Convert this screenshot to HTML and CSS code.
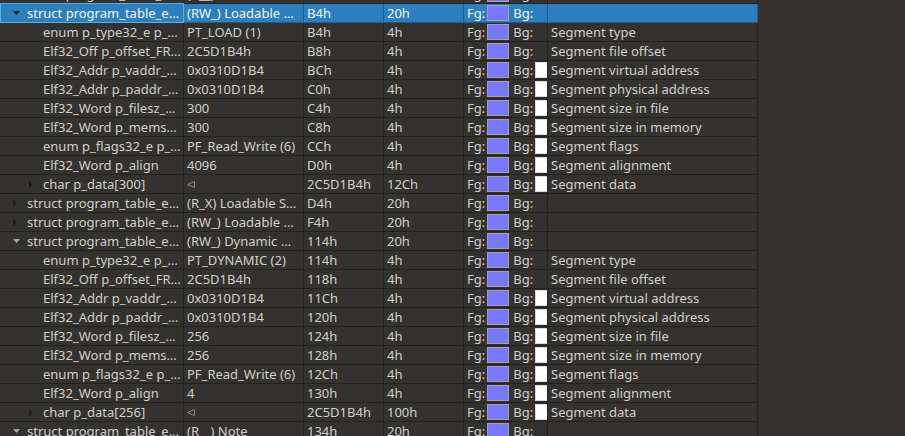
FILE: index.html
```html
<!DOCTYPE html>
<html>
<head>
<meta charset="utf-8">
<link rel="stylesheet" href="styles.css">
</head>
<body>
<div class="tree">
  <div class="row">
    <div class="cell c1 l0"><span class="tw"><svg class="arr dn" width="7" height="4"><polygon points="0,0 7,0 3.5,4"/></svg></span>struct program_table_e…</div>
    <div class="cell c2">(R__) PHDR</div>
    <div class="cell c3">34h</div>
    <div class="cell c4">20h</div>
    <div class="cell c5">Fg:<span class="sw fg"></span><span class="bg-l">Bg:</span></div>
    <div class="cell c6"></div>
  </div>

  <div class="row sel">
    <div class="cell c1 l0"><span class="tw"><svg class="arr dn" width="7" height="4"><polygon points="0,0 7,0 3.5,4"/></svg></span>struct program_table_e…</div>
    <div class="cell c2">(RW_) Loadable …</div>
    <div class="cell c3">B4h</div>
    <div class="cell c4">20h</div>
    <div class="cell c5">Fg:<span class="sw fg"></span><span class="bg-l">Bg:</span></div>
    <div class="cell c6"></div>
  </div>
  <div class="row">
    <div class="cell c1 l1"><span class="tw"></span>enum p_type32_e p_…</div>
    <div class="cell c2">PT_LOAD (1)</div>
    <div class="cell c3">B4h</div>
    <div class="cell c4">4h</div>
    <div class="cell c5">Fg:<span class="sw fg"></span><span class="bg-l">Bg:</span></div>
    <div class="cell c6">Segment type</div>
  </div>
  <div class="row">
    <div class="cell c1 l1"><span class="tw"></span>Elf32_Off p_offset_FR…</div>
    <div class="cell c2">2C5D1B4h</div>
    <div class="cell c3">B8h</div>
    <div class="cell c4">4h</div>
    <div class="cell c5">Fg:<span class="sw fg"></span><span class="bg-l">Bg:</span></div>
    <div class="cell c6">Segment file offset</div>
  </div>
  <div class="row">
    <div class="cell c1 l1"><span class="tw"></span>Elf32_Addr p_vaddr_…</div>
    <div class="cell c2">0x0310D1B4</div>
    <div class="cell c3">BCh</div>
    <div class="cell c4">4h</div>
    <div class="cell c5">Fg:<span class="sw fg"></span><span class="bg-l">Bg:</span><span class="sw wh"></span></div>
    <div class="cell c6">Segment virtual address</div>
  </div>
  <div class="row">
    <div class="cell c1 l1"><span class="tw"></span>Elf32_Addr p_paddr_…</div>
    <div class="cell c2">0x0310D1B4</div>
    <div class="cell c3">C0h</div>
    <div class="cell c4">4h</div>
    <div class="cell c5">Fg:<span class="sw fg"></span><span class="bg-l">Bg:</span><span class="sw wh"></span></div>
    <div class="cell c6">Segment physical address</div>
  </div>
  <div class="row">
    <div class="cell c1 l1"><span class="tw"></span>Elf32_Word p_filesz_…</div>
    <div class="cell c2">300</div>
    <div class="cell c3">C4h</div>
    <div class="cell c4">4h</div>
    <div class="cell c5">Fg:<span class="sw fg"></span><span class="bg-l">Bg:</span><span class="sw wh"></span></div>
    <div class="cell c6">Segment size in file</div>
  </div>
  <div class="row">
    <div class="cell c1 l1"><span class="tw"></span>Elf32_Word p_mems…</div>
    <div class="cell c2">300</div>
    <div class="cell c3">C8h</div>
    <div class="cell c4">4h</div>
    <div class="cell c5">Fg:<span class="sw fg"></span><span class="bg-l">Bg:</span><span class="sw wh"></span></div>
    <div class="cell c6">Segment size in memory</div>
  </div>
  <div class="row">
    <div class="cell c1 l1"><span class="tw"></span>enum p_flags32_e p_…</div>
    <div class="cell c2">PF_Read_Write (6)</div>
    <div class="cell c3">CCh</div>
    <div class="cell c4">4h</div>
    <div class="cell c5">Fg:<span class="sw fg"></span><span class="bg-l">Bg:</span><span class="sw wh"></span></div>
    <div class="cell c6">Segment flags</div>
  </div>
  <div class="row">
    <div class="cell c1 l1"><span class="tw"></span>Elf32_Word p_align</div>
    <div class="cell c2">4096</div>
    <div class="cell c3">D0h</div>
    <div class="cell c4">4h</div>
    <div class="cell c5">Fg:<span class="sw fg"></span><span class="bg-l">Bg:</span><span class="sw wh"></span></div>
    <div class="cell c6">Segment alignment</div>
  </div>
  <div class="row">
    <div class="cell c1 l1"><span class="tw"><svg class="arr rt" width="4" height="7"><polygon points="0,0 4,3.5 0,7"/></svg></span>char p_data[300]</div>
    <div class="cell c2"><svg class="back" width="8" height="7"><polygon points="7.5,0.5 7.5,6.5 0.5,3.5"/></svg></div>
    <div class="cell c3">2C5D1B4h</div>
    <div class="cell c4">12Ch</div>
    <div class="cell c5">Fg:<span class="sw fg"></span><span class="bg-l">Bg:</span><span class="sw wh"></span></div>
    <div class="cell c6">Segment data</div>
  </div>
  <div class="row">
    <div class="cell c1 l0"><span class="tw"><svg class="arr rt" width="4" height="7"><polygon points="0,0 4,3.5 0,7"/></svg></span>struct program_table_e…</div>
    <div class="cell c2">(R_X) Loadable S…</div>
    <div class="cell c3">D4h</div>
    <div class="cell c4">20h</div>
    <div class="cell c5">Fg:<span class="sw fg"></span><span class="bg-l">Bg:</span></div>
    <div class="cell c6"></div>
  </div>
  <div class="row">
    <div class="cell c1 l0"><span class="tw"><svg class="arr rt" width="4" height="7"><polygon points="0,0 4,3.5 0,7"/></svg></span>struct program_table_e…</div>
    <div class="cell c2">(RW_) Loadable …</div>
    <div class="cell c3">F4h</div>
    <div class="cell c4">20h</div>
    <div class="cell c5">Fg:<span class="sw fg"></span><span class="bg-l">Bg:</span></div>
    <div class="cell c6"></div>
  </div>
  <div class="row">
    <div class="cell c1 l0"><span class="tw"><svg class="arr dn" width="7" height="4"><polygon points="0,0 7,0 3.5,4"/></svg></span>struct program_table_e…</div>
    <div class="cell c2">(RW_) Dynamic …</div>
    <div class="cell c3">114h</div>
    <div class="cell c4">20h</div>
    <div class="cell c5">Fg:<span class="sw fg"></span><span class="bg-l">Bg:</span></div>
    <div class="cell c6"></div>
  </div>
  <div class="row">
    <div class="cell c1 l1"><span class="tw"></span>enum p_type32_e p_…</div>
    <div class="cell c2">PT_DYNAMIC (2)</div>
    <div class="cell c3">114h</div>
    <div class="cell c4">4h</div>
    <div class="cell c5">Fg:<span class="sw fg"></span><span class="bg-l">Bg:</span></div>
    <div class="cell c6">Segment type</div>
  </div>
  <div class="row">
    <div class="cell c1 l1"><span class="tw"></span>Elf32_Off p_offset_FR…</div>
    <div class="cell c2">2C5D1B4h</div>
    <div class="cell c3">118h</div>
    <div class="cell c4">4h</div>
    <div class="cell c5">Fg:<span class="sw fg"></span><span class="bg-l">Bg:</span></div>
    <div class="cell c6">Segment file offset</div>
  </div>
  <div class="row">
    <div class="cell c1 l1"><span class="tw"></span>Elf32_Addr p_vaddr_…</div>
    <div class="cell c2">0x0310D1B4</div>
    <div class="cell c3">11Ch</div>
    <div class="cell c4">4h</div>
    <div class="cell c5">Fg:<span class="sw fg"></span><span class="bg-l">Bg:</span><span class="sw wh"></span></div>
    <div class="cell c6">Segment virtual address</div>
  </div>
  <div class="row">
    <div class="cell c1 l1"><span class="tw"></span>Elf32_Addr p_paddr_…</div>
    <div class="cell c2">0x0310D1B4</div>
    <div class="cell c3">120h</div>
    <div class="cell c4">4h</div>
    <div class="cell c5">Fg:<span class="sw fg"></span><span class="bg-l">Bg:</span><span class="sw wh"></span></div>
    <div class="cell c6">Segment physical address</div>
  </div>
  <div class="row">
    <div class="cell c1 l1"><span class="tw"></span>Elf32_Word p_filesz_…</div>
    <div class="cell c2">256</div>
    <div class="cell c3">124h</div>
    <div class="cell c4">4h</div>
    <div class="cell c5">Fg:<span class="sw fg"></span><span class="bg-l">Bg:</span><span class="sw wh"></span></div>
    <div class="cell c6">Segment size in file</div>
  </div>
  <div class="row">
    <div class="cell c1 l1"><span class="tw"></span>Elf32_Word p_mems…</div>
    <div class="cell c2">256</div>
    <div class="cell c3">128h</div>
    <div class="cell c4">4h</div>
    <div class="cell c5">Fg:<span class="sw fg"></span><span class="bg-l">Bg:</span><span class="sw wh"></span></div>
    <div class="cell c6">Segment size in memory</div>
  </div>
  <div class="row">
    <div class="cell c1 l1"><span class="tw"></span>enum p_flags32_e p_…</div>
    <div class="cell c2">PF_Read_Write (6)</div>
    <div class="cell c3">12Ch</div>
    <div class="cell c4">4h</div>
    <div class="cell c5">Fg:<span class="sw fg"></span><span class="bg-l">Bg:</span><span class="sw wh"></span></div>
    <div class="cell c6">Segment flags</div>
  </div>
  <div class="row">
    <div class="cell c1 l1"><span class="tw"></span>Elf32_Word p_align</div>
    <div class="cell c2">4</div>
    <div class="cell c3">130h</div>
    <div class="cell c4">4h</div>
    <div class="cell c5">Fg:<span class="sw fg"></span><span class="bg-l">Bg:</span><span class="sw wh"></span></div>
    <div class="cell c6">Segment alignment</div>
  </div>
  <div class="row">
    <div class="cell c1 l1"><span class="tw"><svg class="arr rt" width="4" height="7"><polygon points="0,0 4,3.5 0,7"/></svg></span>char p_data[256]</div>
    <div class="cell c2"><svg class="back" width="8" height="7"><polygon points="7.5,0.5 7.5,6.5 0.5,3.5"/></svg></div>
    <div class="cell c3">2C5D1B4h</div>
    <div class="cell c4">100h</div>
    <div class="cell c5">Fg:<span class="sw fg"></span><span class="bg-l">Bg:</span><span class="sw wh"></span></div>
    <div class="cell c6">Segment data</div>
  </div>
  <div class="row">
    <div class="cell c1 l0"><span class="tw"><svg class="arr dn" width="7" height="4"><polygon points="0,0 7,0 3.5,4"/></svg></span>struct program_table_e…</div>
    <div class="cell c2">(R__) Note</div>
    <div class="cell c3">134h</div>
    <div class="cell c4">20h</div>
    <div class="cell c5">Fg:<span class="sw fg"></span><span class="bg-l">Bg:</span></div>
    <div class="cell c6"></div>
  </div>
</div>
</body>
</html>
```

FILE: styles.css
```css
html, body {
  margin: 0;
  padding: 0;
  background: #34322f;
  height: 100%;
  overflow: hidden;
}
body {
  font-family: "Noto Sans", "DejaVu Sans", sans-serif;
  font-size: 13px;
  color: #d0cfcc;
}
.tree {
  width: 758px;
  margin-top: -15px;
}
.row {
  display: flex;
  height: 19px;
}
.cell {
  box-sizing: border-box;
  height: 19px;
  border-right: 1px solid #242220;
  border-bottom: 1px solid #242220;
  padding-left: 3px;
  line-height: 18px;
  white-space: nowrap;
  overflow: hidden;
  display: flex;
  align-items: center;
}
.c1 { width: 184px; }
.c2 { width: 120px; }
.c3 { width: 80px; }
.c4 { width: 80px; }
.c5 { width: 84px; }
.c6 { width: 210px; }
.l1 { padding-left: 19px; }
.tw {
  width: 24px;
  flex: none;
  display: flex;
  align-items: center;
}
.arr { margin-left: 10px; display: block; }
.arr.dn { fill: #a9a7a3; }
.arr.rt { fill: #1c1b1a; }
.back {
  display: block;
  fill: none;
  stroke: #8c8a87;
  stroke-width: 1;
}
.sw {
  flex: none;
  box-sizing: border-box;
  width: 22px;
  height: 16px;
  border: 1px solid #a3a3a3;
  margin-left: 2px;
}
.sw.fg { background: #7878ff; }
.sw.wh { background: #ffffff; border-color: #d8d8d8; }
.bg-l { margin-left: 4px; }

.sel .cell {
  background: #2a7fbc;
  color: #f4f6f8;
  border-right-color: #1f5f8e;
  border-bottom-color: #1f5f8e;
}
.sel .c1 {
  border-right-color: #58aee6;
  border-bottom-color: #58aee6;
  box-shadow: 0 -1px 0 #58aee6, inset 1px 0 0 #58aee6;
}
.sel .arr.dn { fill: #1a2633; }
```
